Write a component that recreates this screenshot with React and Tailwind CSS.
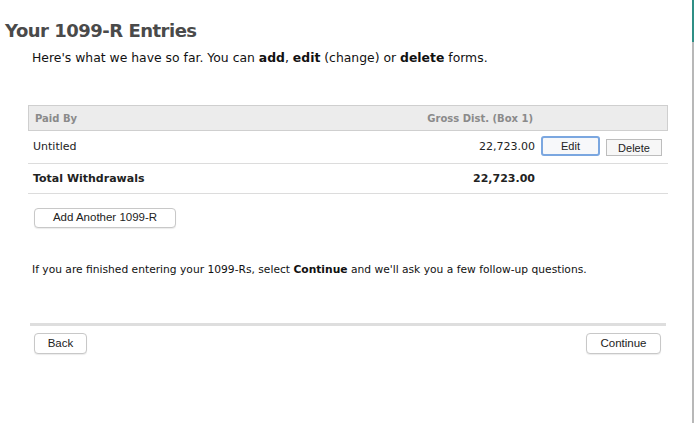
import React from 'react';

const btn =
  'rounded-[4px] border border-[#c8c8c8] bg-white shadow-[0_1px_1px_rgba(0,0,0,0.08)] text-[11.5px] text-[#222] leading-none font-["Liberation_Sans",Arial,sans-serif]';

const App = () => {
  return (
    <div className="flex w-[694px] h-[423px] bg-white font-['DejaVu_Sans',sans-serif] text-[#222] overflow-hidden">
      <div className="flex-1 flex flex-col">
        {/* Title */}
        <h1 className="pl-[5px] pt-[19px] text-[18px] font-bold text-[#4a4a4a] leading-[24px] tracking-[-0.5px]">
          Your 1099-R Entries
        </h1>
        <p className="pl-[32px] mt-[7px] text-[12.4px] leading-[16px] text-[#111]">
          Here's what we have so far. You can <b>add</b>, <b>edit</b> (change) or <b>delete</b> forms.
        </p>

        {/* Table */}
        <div className="ml-[28px] w-[640px] mt-[39px] text-[11px]">
          <div className="flex items-center h-[26px] bg-[#ececec] border border-[#cfcfcf] font-bold text-[#8a8a8a] text-[10px]">
            <div className="pl-[6px] flex-1">Paid By</div>
            <div className="shrink-0 pr-[134px] whitespace-nowrap">Gross Dist. (Box 1)</div>
          </div>
          <div className="flex items-center h-[33px] border-b border-[#dcdcdc]">
            <div className="pl-[5px] flex-1">Untitled</div>
            <div className="pr-[6px]">22,723.00</div>
            <button className="-mt-[2px] w-[59px] h-[20px] rounded-[3px] border-2 border-[#7ba7e0] bg-[#f7f8fa] text-[11px] font-['Liberation_Sans',Arial,sans-serif] text-[#222]">
              Edit
            </button>
            <button className="ml-[6px] mr-[6px] w-[56px] h-[17px] border border-[#bdbdbd] bg-[#f7f7f7] text-[11px] font-['Liberation_Sans',Arial,sans-serif] text-[#222]">
              Delete
            </button>
          </div>
          <div className="flex items-center h-[30px] pt-[2px] border-b border-[#dcdcdc] font-bold">
            <div className="pl-[5px] flex-1">Total Withdrawals</div>
            <div className="pr-[133px]">22,723.00</div>
          </div>
        </div>

        <div className="ml-[34px] mt-[10px]">
          <button className={`${btn} w-[142px] h-[20px]`}>Add Another 1099-R</button>
        </div>

        <p className="pl-[32px] mt-[35px] text-[10.7px] leading-[14px] text-[#111]">
          If you are finished entering your 1099-Rs, select <b>Continue</b> and we'll ask you a few follow-up questions.
        </p>

        <div className="ml-[30px] w-[636px] mt-[46px] h-[3px] bg-[#dedede]" />

        <div className="flex justify-between ml-[34px] w-[627px] mt-[7px]">
          <button className={`${btn} w-[53px] h-[21px]`}>Back</button>
          <button className={`${btn} w-[75px] h-[21px]`}>Continue</button>
        </div>
      </div>
      <div className="w-[2px] flex flex-col">
        <div className="h-[42px] bg-[#2f8f86]" />
        <div className="flex-1 bg-[#b8b8b8]" />
      </div>
    </div>
  );
};

export default App;
